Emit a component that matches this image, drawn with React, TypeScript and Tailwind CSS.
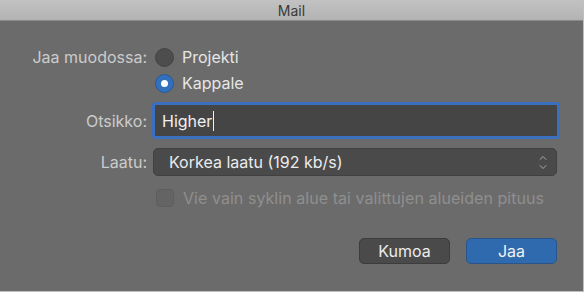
import { ChevronDown, ChevronUp } from "lucide-react";

const font = { fontFamily: "Inter, 'Liberation Sans', sans-serif" };

function Radio({ checked, label }: { checked?: boolean; label: string }) {
  return (
    <div className="flex items-center gap-2 h-[20px]">
      {checked ? (
        <div className="flex h-[19px] w-[19px] items-center justify-center rounded-full border border-[#2a5a93] bg-[#3270bd]">
          <div className="h-[7px] w-[7px] rounded-full bg-white" />
        </div>
      ) : (
        <div className="h-[19px] w-[19px] rounded-full border border-[#444] bg-[#4d4d4d]" />
      )}
      <span className="text-[16px] text-[#e6e6e6]">{label}</span>
    </div>
  );
}

export default function App() {
  return (
    <div
      className="flex h-[292px] w-[584px] flex-col overflow-hidden border-r border-b border-[#bfbfbf] bg-[#6b6b6b]"
      style={font}
    >
      <div className="flex h-[21px] shrink-0 items-center justify-center border-b border-[#8a8a8a] bg-gradient-to-b from-[#c2c2c2] to-[#b3b3b3]">
        <span className="text-[14px] text-[#3a3a3a]">Mail</span>
      </div>

      <div className="flex flex-col pt-[26px]">
        {/* format */}
        <div className="flex">
          <div className="w-[147px] text-right text-[16px] leading-[20px] text-[#cbcbcb]">
            Jaa muodossa:
          </div>
          <div className="ml-[8px] flex flex-col gap-[6px]">
            <Radio label="Projekti" />
            <Radio checked label="Kappale" />
          </div>
        </div>

        {/* title */}
        <div className="mt-[9px] flex items-center">
          <div className="w-[147px] text-right text-[16px] text-[#cbcbcb]">Otsikko:</div>
          <div className="ml-[5px] flex h-[37px] w-[408px] items-center rounded-[4px] border-[3px] border-[#3b6fc0] bg-[#454545] pl-[7px]">
            <span className="text-[16px] text-[#f0f0f0]">Higher</span>
            <span className="ml-[1px] h-[20px] w-[1px] bg-[#f0f0f0]" />
          </div>
        </div>

        {/* quality */}
        <div className="mt-[9px] flex items-center">
          <div className="w-[147px] text-right text-[16px] text-[#cbcbcb]">Laatu:</div>
          <div className="ml-[6px] flex h-[28px] w-[404px] items-center justify-between rounded-[5px] border border-[#404040] bg-[#4a4a4a] pl-[15px] pr-[7px]">
            <span className="text-[16px] text-[#ececec]">Korkea laatu (192 kb/s)</span>
            <div className="flex flex-col items-center text-[#cfcfcf]">
              <ChevronUp size={12} strokeWidth={1.4} className="-mb-[3px]" />
              <ChevronDown size={12} strokeWidth={1.4} />
            </div>
          </div>
        </div>

        {/* checkbox */}
        <div className="mt-[10px] flex items-center">
          <div className="ml-[156px] h-[18px] w-[18px] rounded-[4px] border border-[#5e5e5e] bg-[#646464]" />
          <span className="ml-[9px] text-[16px] tracking-[0.05px] text-[#8f8f8f]">
            Vie vain syklin alue tai valittujen alueiden pituus
          </span>
        </div>

        {/* buttons */}
        <div className="mt-[28px] flex justify-end gap-[16px] pr-[26px]">
          <button className="flex h-[26px] w-[91px] items-center justify-center rounded-[5px] border border-[#3c3c3c] bg-[#4a4a4a] text-[16px] text-[#ececec]">
            Kumoa
          </button>
          <button className="flex h-[26px] w-[91px] items-center justify-center rounded-[5px] border border-[#2a548a] bg-[#2f6aae] text-[16px] text-[#f2f2f2]">
            Jaa
          </button>
        </div>
      </div>
    </div>
  );
}
